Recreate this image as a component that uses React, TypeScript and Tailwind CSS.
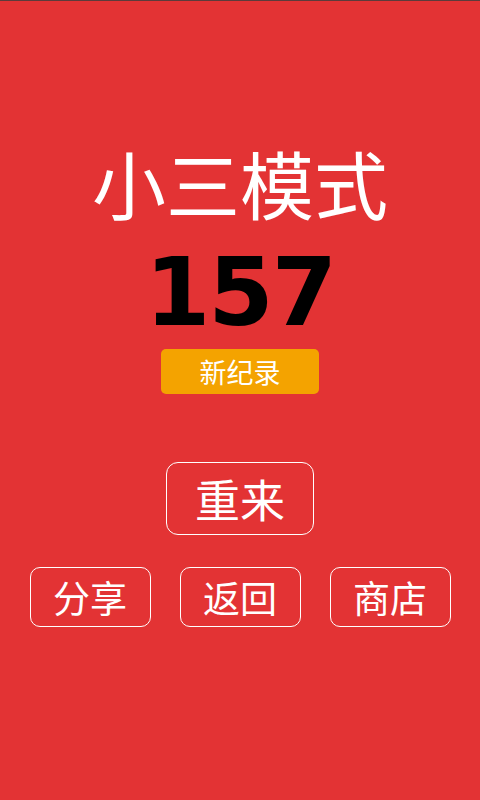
import React from 'react';

const cjk = { fontFamily: '"Noto Sans CJK SC", "Noto Sans", sans-serif' };

export default function App() {
  return (
    <div className="w-[480px] h-[800px] bg-[#e33334] border-t border-[#5b3b3b] flex flex-col items-center" style={cjk}>
      <h1 className="mt-[144px] text-[74px] leading-none text-white font-normal">小三模式</h1>

      <div
        className="mt-[27px] text-[94px] leading-none font-bold text-black tracking-[-2px]"
        style={{ fontFamily: '"DejaVu Sans", sans-serif' }}
      >
        157
      </div>

      <div className="mt-[9px] w-[158px] h-[45px] rounded-[5px] bg-[#f4a300] flex items-center justify-center text-white text-[27px] leading-none">
        新纪录
      </div>

      <button className="mt-[68px] w-[148px] h-[73px] rounded-[12px] border-[1.5px] border-white text-white text-[45px] leading-none flex items-center justify-center">
        重来
      </button>

      <div className="mt-[32px] flex gap-[29px]">
        {['分享', '返回', '商店'].map(t => (
          <button
            key={t}
            className="w-[121px] h-[60px] rounded-[10px] border-[1.5px] border-white text-white text-[37px] leading-none flex items-center justify-center"
          >
            {t}
          </button>
        ))}
      </div>
    </div>
  );
}
